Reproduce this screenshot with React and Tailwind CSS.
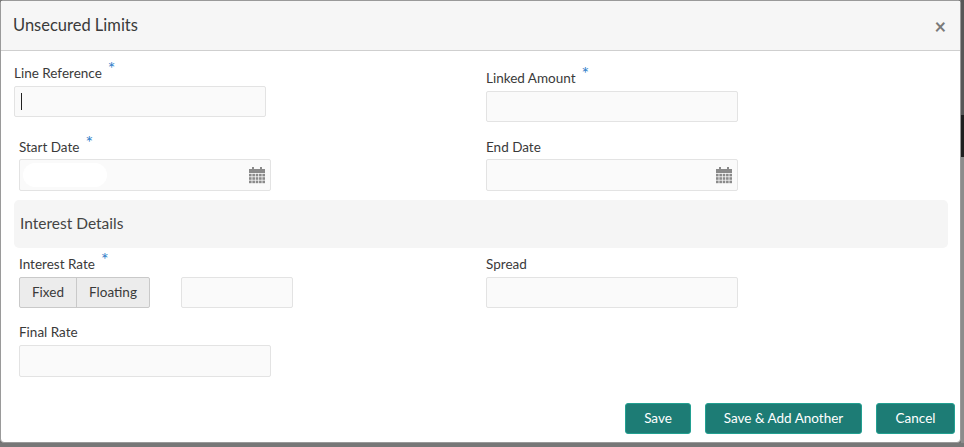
import React from 'react';

const font = { fontFamily: 'Lato, "Open Sans", "Liberation Sans", sans-serif' };

const Star = () => (
  <span className="relative -top-[5px] ml-[6px] text-[18px] leading-none text-[#2f80c9]">*</span>
);

const Label = ({ children, required, className = '' }) => (
  <div className={`flex h-5 items-center text-[13.5px] leading-5 text-[#3a3a3a] ${className}`}>
    {children}
    {required && <Star />}
  </div>
);

const CalendarIcon = () => (
  <svg width="16" height="17" viewBox="0 0 16 17" className="shrink-0">
    <rect x="3" y="0" width="2" height="4" fill="#8a8a8a" />
    <rect x="11" y="0" width="2" height="4" fill="#8a8a8a" />
    <rect x="0" y="2" width="16" height="4" fill="#8a8a8a" />
    {[6.8, 10.2, 13.6].map((y) =>
      [0, 3.35, 6.7, 10.05, 13.4].map((x) => (
        <rect key={`${x}-${y}`} x={x} y={y} width="2.6" height="2.6" fill="#8a8a8a" />
      ))
    )}
  </svg>
);

const Input = ({ className = '', children }) => (
  <div
    className={`flex items-center rounded-[2px] border border-[#e3e3e3] bg-[#fafafa] ${className}`}
  >
    {children}
  </div>
);

const DateInput = ({ redacted }) => (
  <Input className="h-[32px] w-[252px] justify-between pl-[3px] pr-[5px]">
    {redacted ? <div className="h-[24px] w-[84px] rounded-full bg-white" /> : <div />}
    <CalendarIcon />
  </Input>
);

export default function App() {
  return (
    <div className="flex h-[447px] w-[964px] flex-col overflow-hidden bg-[#787878]" style={font}>
      <div className="flex h-[443px]">
        {/* Modal */}
        <div className="flex w-[961px] flex-col rounded-[4px] border border-[#9a9a9a] bg-white shadow-md">
          {/* Header */}
          <div className="flex h-[50px] shrink-0 items-center justify-between border-b border-[#cfcfcf] bg-[#f6f6f6] pl-[12px] pr-[14px]">
            <h2 className="text-[16.5px] text-[#3a3a3a]">Unsecured Limits</h2>
            <span className="text-[20px] font-bold leading-none text-[#7a7a7a]">×</span>
          </div>

          {/* Body */}
          <div className="flex flex-1 flex-col">
            {/* Line Reference / Linked Amount */}
            <div className="flex pt-[12px]">
              <div className="w-[485px] pl-[13px]">
                <Label required>Line Reference</Label>
                <Input className="mt-[3px] h-[31px] w-[252px] pl-[6px]">
                  <div className="h-[17px] w-px bg-[#222]" />
                </Input>
              </div>
              <div className="pt-[5px]">
                <Label required>Linked Amount</Label>
                <Input className="mt-[3px] h-[31px] w-[252px]" />
              </div>
            </div>

            {/* Start / End date */}
            <div className="mt-[15px] flex">
              <div className="w-[485px] pl-[18px]">
                <Label required>Start Date</Label>
                <div className="mt-[2px]">
                  <DateInput redacted />
                </div>
              </div>
              <div>
                <Label>End Date</Label>
                <div className="mt-[2px]">
                  <DateInput />
                </div>
              </div>
            </div>

            {/* Interest Details */}
            <div className="ml-[13px] mt-[9px] flex h-[48px] w-[934px] items-center rounded-[5px] bg-[#f5f5f5] pl-[6px]">
              <span className="text-[15.5px] text-[#444]">Interest Details</span>
            </div>

            {/* Interest Rate / Spread */}
            <div className="mt-[6px] flex">
              <div className="w-[485px] pl-[18px]">
                <Label required>Interest Rate</Label>
                <div className="mt-[3px] flex items-center">
                  <div className="flex h-[31px] overflow-hidden rounded-[2px] border border-[#c9c9c9] bg-[#ececec] text-[13.5px] text-[#3a3a3a]">
                    <div className="flex w-[57px] items-center justify-center border-r border-[#c9c9c9]">Fixed</div>
                    <div className="flex w-[72px] items-center justify-center">Floating</div>
                  </div>
                  <Input className="ml-[31px] h-[31px] w-[112px]" />
                </div>
              </div>
              <div>
                <Label>Spread</Label>
                <Input className="mt-[3px] h-[31px] w-[252px]" />
              </div>
            </div>

            {/* Final Rate */}
            <div className="mt-[14px] pl-[18px]">
              <Label>Final Rate</Label>
              <Input className="mt-[3px] h-[32px] w-[252px]" />
            </div>

            {/* Footer buttons */}
            <div className="mt-[26px] flex justify-end gap-[14px] pr-[5px]">
              <button className="h-[31px] w-[66px] rounded-[3px] border border-[#22a091] bg-[#1d7c75] text-[13.5px] text-white">
                Save
              </button>
              <button className="h-[31px] w-[157px] rounded-[3px] border border-[#22a091] bg-[#1d7c75] text-[13.5px] text-white">
                Save &amp; Add Another
              </button>
              <button className="h-[31px] w-[79px] rounded-[3px] border border-[#22a091] bg-[#1d7c75] text-[13.5px] text-white">
                Cancel
              </button>
            </div>
          </div>
        </div>

        {/* Page behind the modal, right edge */}
        <div className="flex flex-1 flex-col">
          <div className="h-[115px] bg-[#575757]" />
          <div className="h-[42px] bg-[#1f1f1f]" />
          <div className="flex-1 bg-[#8c8c8c]" />
        </div>
      </div>
      <div className="h-[4px] bg-[#777]" />
    </div>
  );
}
